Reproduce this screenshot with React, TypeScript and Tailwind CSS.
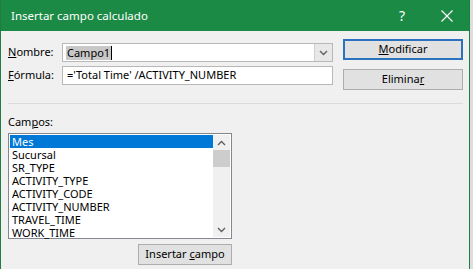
const font = { fontFamily: '"Noto Sans", "Segoe UI", Arial, sans-serif' };

const campos = [
  'Mes',
  'Sucursal',
  'SR_TYPE',
  'ACTIVITY_TYPE',
  'ACTIVITY_CODE',
  'ACTIVITY_NUMBER',
  'TRAVEL_TIME',
  'WORK_TIME',
];

function Chevron({ up = false }: { up?: boolean }) {
  return (
    <svg width="9" height="6" viewBox="0 0 9 6" fill="none">
      <path
        d={up ? 'M1 5L4.5 1.5L8 5' : 'M1 1L4.5 4.5L8 1'}
        stroke="#606060"
        strokeWidth="1.4"
      />
    </svg>
  );
}

export default function App() {
  return (
    <div
      className="flex w-[473px] h-[269px] overflow-hidden bg-[#e9e9e9] text-[11px] text-black"
      style={font}
    >
      <div className="flex flex-col w-[470px] h-full border-x border-[#1f7d43] bg-[#f0f0f0]">
        {/* title bar */}
        <div className="flex items-center h-[31px] bg-[#1b8a45] text-white shrink-0">
          <span className="ml-[10px] text-[11.5px]">Insertar campo calculado</span>
          <span className="ml-auto mr-[36px] text-[14px]">?</span>
          <svg width="12" height="12" viewBox="0 0 12 12" className="mr-[16px]">
            <path d="M0.5 0.5L11.5 11.5M11.5 0.5L0.5 11.5" stroke="white" strokeWidth="1.2" />
          </svg>
        </div>

        {/* top area */}
        <div className="flex pl-[7px] h-[72px]">
          <div className="flex flex-col gap-[4px] pt-[12px]">
            <div className="flex items-center h-[19px]">
              <span className="w-[54px]">
                <u>N</u>ombre:
              </span>
              <div className="flex w-[271px] h-[19px] bg-white border border-[#b8b8b8]">
                <div className="flex items-center flex-1 pl-[3px]">
                  <span className="bg-[#c8c8c8] px-[1px] leading-[14px]">Campo1</span>
                  <span className="w-px h-[14px] bg-black" />
                </div>
                <div className="flex items-center justify-center w-[18px] bg-[#e8e8e8] border-l border-[#d0d0d0]">
                  <Chevron />
                </div>
              </div>
            </div>
            <div className="flex items-center h-[19px]">
              <span className="w-[54px]">
                <u>F</u>órmula:
              </span>
              <div className="flex items-center w-[271px] h-[19px] bg-white border border-[#b8b8b8] pl-[4px]">
                ='Total Time' /ACTIVITY_NUMBER
              </div>
            </div>
          </div>
          <div className="flex flex-col gap-[9px] pt-[8px] ml-[10px]">
            <button className="w-[120px] h-[21px] bg-[#e1e1e1] border-2 border-[#2a72bd] flex items-center justify-center">
              <span>
                <u>M</u>odificar
              </span>
            </button>
            <button className="w-[120px] h-[21px] bg-[#e1e1e1] border border-[#adadad] flex items-center justify-center">
              <span>
                Elimina<u>r</u>
              </span>
            </button>
          </div>
        </div>

        <div className="h-px bg-[#dcdcdc] ml-[7px] mr-[6px]" />

        {/* campos */}
        <div className="flex flex-col pl-[7px] pt-[10px]">
          <span className="leading-[16px]">
            Cam<u>p</u>os:
          </span>
          <div className="flex mt-[3px] w-[224px] h-[106px] bg-white border border-[#828790] p-px">
            <div className="flex flex-col flex-1">
              {campos.map((c, i) => (
                <div
                  key={c}
                  className={
                    i === 0
                      ? 'h-[13px] leading-[13px] pl-[2px] bg-[#0078d7] text-white'
                      : 'h-[13px] leading-[13px] pl-[2px]'
                  }
                >
                  {c}
                </div>
              ))}
            </div>
            <div className="flex flex-col items-center w-[17px] bg-[#f0f0f0]">
              <div className="h-[15px] flex items-center">
                <Chevron up />
              </div>
              <div className="w-full h-[17px] bg-[#cdcdcd]" />
              <div className="mt-auto h-[15px] flex items-center">
                <Chevron />
              </div>
            </div>
          </div>
          <div className="flex mt-[5px] w-[224px] justify-end">
            <button className="w-[94px] h-[21px] bg-[#e1e1e1] border border-[#adadad] flex items-center justify-center">
              <span>
                Insertar <u>c</u>ampo
              </span>
            </button>
          </div>
        </div>
      </div>
      <div className="flex-1 bg-[#dedede]" />
    </div>
  );
}
